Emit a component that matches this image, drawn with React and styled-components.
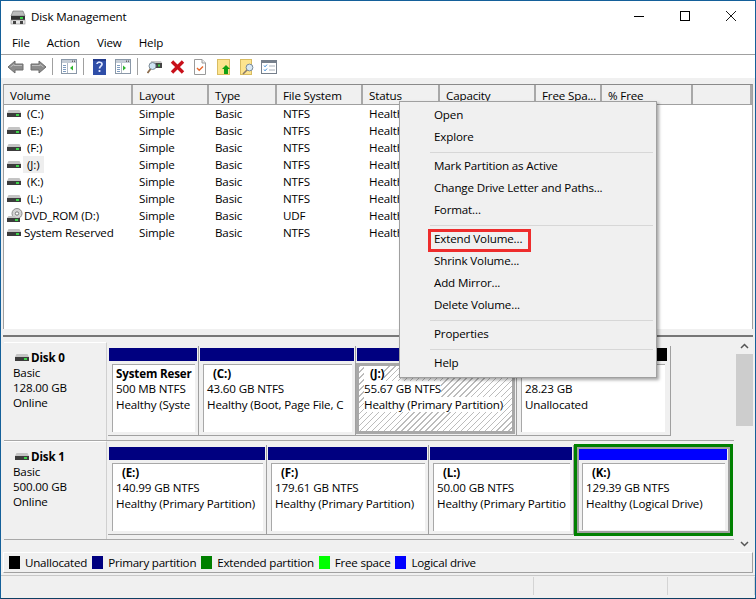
import React from 'react';
import styled, { createGlobalStyle } from 'styled-components';

const GlobalStyle = createGlobalStyle`
  html, body {
    margin: 0;
    padding: 0;
    background: #fff;
  }
`;

const Window = styled.div`
  position: relative;
  box-sizing: border-box;
  width: 756px;
  height: 599px;
  display: flex;
  flex-direction: column;
  overflow: hidden;
  background: #f0f0f0;
  border: 1px solid #14609a;
  border-bottom-color: #0f3f63;
  color: #000;
  font-family: "Open Sans", "Noto Sans", sans-serif;
  font-size: 11.6px;
  letter-spacing: -0.15px;
`;

const TitleBar = styled.div`
  height: 32px;
  flex: none;
  display: flex;
  align-items: center;
  padding: 0 1px 0 9px;
  background: #fff;
`;

const Title = styled.span`
  margin: -2px 0 0 5px;
  flex: 1;
`;

const WinControl = styled.div`
  width: 46px;
  height: 32px;
  display: flex;
  align-items: center;
  justify-content: center;
  margin-top: -2px;
`;

const MenuBar = styled.div`
  height: 21px;
  box-sizing: content-box;
  flex: none;
  display: flex;
  align-items: center;
  gap: 17px;
  padding-left: 11px;
  background: #fff;
  border-bottom: 1px solid #a0a0a0;

  & > span {
    margin-top: -2px;
  }
`;

const Toolbar = styled.div`
  height: 23px;
  flex: none;
  display: flex;
  align-items: center;
  padding-left: 6px;
  background: #fff;
`;

const ToolIcon = styled.svg`
  flex: none;
  display: block;
  margin-right: ${p => p.$gap ?? 6}px;
  transform: ${p => (p.$flip ? 'scaleX(-1)' : 'none')};
`;

const ToolSep = styled.div`
  width: 1px;
  height: 17px;
  flex: none;
  background: #a0a0a0;
  margin-right: ${p => p.$after ?? 9}px;
`;

const Band = styled.div`
  height: 6px;
  flex: none;
  background: #f0f0f0;
`;

const ListPane = styled.div`
  flex: none;
  height: 244px;
  margin: 0 2px;
  border-left: 1px solid #a0a0a0;
  border-right: 1px solid #a0a0a0;
  border-top: 1px solid #8a8a8a;
  background: #fff;
`;

const HeaderRow = styled.div`
  height: 19px;
  display: grid;
  grid-template-columns: 129px 76px 68px 86px 77px 96px 66px 91px 1fr;
  background: #f0f0f0;
  border-bottom: 1px solid #a0a0a0;
`;

const HeaderCell = styled.div`
  box-sizing: border-box;
  padding: 2px 0 0 6px;
  border-right: 2px solid #a8a8a8;
  line-height: 18px;
  white-space: nowrap;
  overflow: hidden;
`;

const Row = styled.div`
  height: 17px;
  display: grid;
  grid-template-columns: 129px 76px 68px 86px 77px 96px 66px 91px 1fr;
  align-items: center;
`;

const Cell = styled.div`
  padding-left: 6px;
  white-space: nowrap;
  overflow: hidden;
`;

const VolumeCell = styled.div`
  display: flex;
  align-items: center;
  padding-left: 3px;
  white-space: nowrap;
`;

const VolumeName = styled.span`
  margin-left: 2px;
  padding: 0 ${p => (p.$inset ? 5 : 1)}px 0 ${p => (p.$inset ? 4 : 1)}px;
  line-height: 17px;
  background: ${p => (p.$active ? '#eeeeee' : 'transparent')};
`;

const Splitter = styled.div`
  height: 6px;
  flex: none;
  margin: 0 2px 1px;
  background: #f0f0f0;
  border-bottom: 2px solid #777;
`;

const GraphPane = styled.div`
  height: 214px;
  flex: none;
  display: flex;
  margin: 0 3px;
`;

const DiskList = styled.div`
  flex: 1;
  display: flex;
  flex-direction: column;
  padding-top: 4px;
`;

const DiskRow = styled.div`
  height: 98px;
  flex: none;
  display: flex;
  width: 730px;
  border-bottom: 1px solid #a8a8a8;
`;

const DiskLabel = styled.div`
  width: 103px;
  flex: none;
  box-sizing: border-box;
  padding: 7px 0 0 9px;
  line-height: 15px;
  border-right: 1px solid #d0d0d0;
  border-top: 1px solid #fff;
`;

const DiskName = styled.div`
  display: flex;
  align-items: center;
  margin-left: 2px;
  font-weight: 700;
  gap: 2px;
`;

const PartitionsWrap = styled.div`
  flex: none;
  width: ${p => p.$w}px;
  height: 90px;
  margin-top: 4px;
  margin-left: 1px;
  display: flex;
  box-sizing: border-box;
  border-bottom: 1px solid #a0a0a0;
  border-right: ${p => (p.$closed ? '1px solid #a0a0a0' : 'none')};
`;

const Partition = styled.div`
  box-sizing: border-box;
  flex: none;
  width: ${p => p.$w}px;
  display: flex;
  flex-direction: column;
  padding: 2px ${p => p.$padRight ?? 1}px 0 1px;
  border-right: ${p => (p.$last ? 'none' : '1px solid #a0a0a0')};

  ${p => p.$selected && `
    border: 3px solid #008000;
    outline: 2px solid #a0a0a0;
    outline-offset: -5px;
    padding: 0 3px 0 2px;
    margin-top: -1px;
    margin-bottom: -2px;
  `}
`;

const PartitionBar = styled.div`
  height: 13px;
  flex: none;
  background: ${p => p.$color};
`;

const PartitionBody = styled.div`
  flex: 1;
  box-sizing: border-box;
  margin: 3px 2px 3px 3px;
  padding: 1px 0 0 3px;
  line-height: 15.3px;
  white-space: nowrap;
  overflow: hidden;
  background: #fff;
  border-top: 1px solid #a8a8a8;
  border-left: 1px solid #a8a8a8;

  ${p => p.$hatched && `
    margin: 2px 0 1px -1px;
    border: 3px solid #a8a8a8;
    padding: 0 0 0 5px;
    background: repeating-linear-gradient(135deg, #bcbcbc 0 1px, #fff 1px 4.2px);
  `}
`;

const BodyLine = styled.div`
  width: fit-content;
  background: #fff;
  font-weight: ${p => (p.$bold ? 700 : 400)};
  padding-left: ${p => (p.$indent ? 6 : 0)}px;
`;

const Scrollbar = styled.div`
  width: 17px;
  flex: none;
  display: flex;
  flex-direction: column;
  align-items: center;
  margin: -1px -1px 0 0;
`;

const ScrollArrow = styled.div`
  height: 17px;
  display: flex;
  align-items: center;
  justify-content: center;
`;

const ScrollTrack = styled.div`
  flex: 1;
  width: 100%;
`;

const ScrollThumb = styled.div`
  height: 72px;
  width: 100%;
  background: #cdcdcd;
`;

const Legend = styled.div`
  height: 21px;
  flex: none;
  box-sizing: border-box;
  margin: 0 2px;
  display: flex;
  align-items: center;
  padding-left: 5px;
  letter-spacing: -0.22px;
  border-top: 1px solid #fff;
  border-left: 1px solid #fff;
  border-right: 1px solid #a0a0a0;
  border-bottom: 1px solid #a0a0a0;
`;

const Swatch = styled.span`
  width: 11px;
  height: 13px;
  flex: none;
  box-sizing: border-box;
  background: ${p => p.$color};
  margin-right: 5px;
`;

const LegendText = styled.span`
  margin-right: 5px;
`;

const StatusBar = styled.div`
  flex: 1;
  margin-top: 2px;
  display: flex;
  border-top: 1px solid #c8c8c8;
`;

const StatusCell = styled.div`
  width: ${p => p.$w}px;
  flex: ${p => (p.$w ? 'none' : 1)};
  border-right: 1px solid #d4d4d4;
  margin: 1px 0 3px;
`;

/* the popup sits over the list and disks */
const ContextMenu = styled.div`
  position: absolute;
  left: 398px;
  top: 100px;
  width: 258px;
  box-sizing: border-box;
  padding: 3px 2px 2px;
  background: #f0f0f0;
  border: 1px solid #a0a0a0;
  box-shadow: 2px 2px 3px rgba(0, 0, 0, 0.35);
`;

const MenuItem = styled.div`
  position: relative;
  height: 22px;
  line-height: 20px;
  padding-left: 32px;

  ${p => p.$marked && `
    &::before {
      content: '';
      position: absolute;
      left: 26px;
      top: 0;
      width: 103px;
      height: 23px;
      box-sizing: border-box;
      border: 3px solid #ee2c2c;
    }
  `}
`;

const MenuSep = styled.div`
  height: 1px;
  margin: 3px 1px 3px 28px;
  background: #d7d7d7;
`;

const SmallIcon = styled.svg`
  flex: none;
  display: block;
  margin: ${p => p.$margin || 0};
`;

const DriveIcon = () => (
  <SmallIcon width="14" height="11" viewBox="0 0 14 11">
    <path d="M1.5 2 L12.5 2 L14 5 L0 5 Z" fill="#c4c4c4" />
    <rect x="0" y="5" width="14" height="4" fill="#3c3c3c" />
    <rect x="9" y="6" width="3" height="2" fill="#3ed24a" />
  </SmallIcon>
);

const DvdIcon = () => (
  <SmallIcon $margin="-1px -2px 0 0" width="16" height="15" viewBox="0 0 16 15">
    <circle cx="10" cy="5.5" r="5" fill="#d4d4d4" stroke="#8c8c8c" />
    <circle cx="10" cy="5.5" r="1.7" fill="#fff" stroke="#777" />
    <path d="M1.5 8 L8 8 L9 10 L0 10 Z" fill="#c4c4c4" />
    <rect x="0" y="10" width="13" height="4" fill="#3c3c3c" />
    <rect x="8" y="11" width="3" height="2" fill="#3ed24a" />
  </SmallIcon>
);

const AppIcon = () => (
  <SmallIcon width="16" height="16" viewBox="0 0 16 16">
    <path d="M3 2 L13 2 L15 7 L1 7 Z" fill="#bcbcbc" stroke="#6a6a6a" strokeWidth="0.6" />
    <rect x="1" y="7" width="14" height="4" fill="#333" />
    <rect x="10" y="8" width="3" height="2" fill="#3ed24a" />
    <rect x="1" y="11" width="14" height="4" fill="#e8e8e8" stroke="#8a8a8a" strokeWidth="0.6" />
    <rect x="3" y="12" width="3" height="3" fill="#444" />
    <rect x="10" y="12" width="3" height="3" fill="#444" />
  </SmallIcon>
);

const ArrowIcon = ({ flip, gap }) => (
  <ToolIcon $flip={flip} $gap={gap} width="17" height="14" viewBox="0 0 17 14">
    <path d="M1 7 L8 1 L8 4 L16 4 L16 10 L8 10 L8 13 Z" fill="#8c8c8c" stroke="#6e6e6e" />
    <path d="M3.5 7 L7 4.5 L7 5.5 L15 5.5" fill="none" stroke="#bdbdbd" />
  </ToolIcon>
);

const PanelIcon = ({ right }) => (
  <ToolIcon $gap={6} width="16" height="15" viewBox="0 0 16 15">
    <rect x="0.5" y="0.5" width="15" height="14" fill="#fff" stroke="#8a98a8" />
    <rect x="1" y="1" width="14" height="3" fill="#c4ccd6" />
    <rect x="11" y="1.5" width="1" height="1.5" fill="#666" />
    <rect x="13" y="1.5" width="1" height="1.5" fill="#666" />
    <rect x="2" y="6" width="3" height="1" fill="#7e9cc0" />
    <rect x="2" y="8" width="3" height="1" fill="#7e9cc0" />
    <rect x="2" y="10" width="3" height="1" fill="#7e9cc0" />
    <rect x="2" y="12" width="3" height="1" fill="#7e9cc0" />
    <rect x="6" y="4" width="1" height="10" fill="#b0b8c4" />
    {right
      ? <path d="M8 6.5 L11 9 L8 11.5 Z" fill="#2fb52f" />
      : <path d="M12 6.5 L9 9 L12 11.5 Z" fill="#2fb52f" />}
  </ToolIcon>
);

const HelpIcon = () => (
  <ToolIcon $gap={9} width="13" height="16" viewBox="0 0 13 16">
    <rect width="13" height="16" fill="#2f4ea8" />
    <rect width="13" height="2" fill="#223a8a" />
    <path d="M4 5 C4 2.6 9 2.6 9 5.2 C9 7.2 6.5 7.2 6.5 9.6" fill="none" stroke="#dfe7ff" strokeWidth="1.7" />
    <rect x="5.6" y="11" width="1.8" height="2" fill="#dfe7ff" />
  </ToolIcon>
);

const ConnectIcon = () => (
  <ToolIcon $gap={8} width="15" height="14" viewBox="0 0 15 14">
    <path d="M4 1 L14 1 L15 3 L4 3 Z" fill="#c8c8c8" />
    <rect x="3" y="3" width="12" height="5" fill="#444" />
    <rect x="11" y="4.5" width="2" height="2" fill="#3ed24a" />
    <circle cx="5.5" cy="6" r="3.5" fill="#cfe3f2" stroke="#7b8b98" />
    <path d="M3.5 9 L0.5 13" stroke="#8a6a4a" strokeWidth="1.8" />
  </ToolIcon>
);

const DeleteIcon = () => (
  <ToolIcon $gap={9} width="15" height="14" viewBox="0 0 15 14">
    <path d="M2 1.5 L13 12.5 M13 1.5 L2 12.5" stroke="#c8101a" strokeWidth="3.4" />
  </ToolIcon>
);

const CheckDocIcon = () => (
  <ToolIcon $gap={11} width="12" height="16" viewBox="0 0 12 16">
    <path d="M0.5 0.5 L8 0.5 L11.5 4 L11.5 15.5 L0.5 15.5 Z" fill="#fff" stroke="#9a9a9a" />
    <path d="M8 0.5 L8 4 L11.5 4" fill="#eee" stroke="#9a9a9a" />
    <path d="M3 9 L5.2 11.2 L9 7.5" fill="none" stroke="#e8662a" strokeWidth="1.4" />
  </ToolIcon>
);

const FolderUpIcon = () => (
  <ToolIcon $gap={10} width="13" height="16" viewBox="0 0 13 16">
    <rect x="0.5" y="0.5" width="12" height="15" fill="#fde48e" stroke="#d8bc62" />
    <path d="M9 6 L13 10 L11 10 L11 15 L7 15 L7 10 L5 10 Z" fill="#12a012" />
  </ToolIcon>
);

const FolderFindIcon = () => (
  <ToolIcon $gap={7} width="14" height="16" viewBox="0 0 14 16">
    <rect x="0.5" y="0.5" width="11" height="15" fill="#fde48e" stroke="#d8bc62" />
    <circle cx="9.5" cy="8.5" r="3.4" fill="#d8e8f4" stroke="#7a8a98" />
    <path d="M7 11 L3 15" stroke="#8a7a6a" strokeWidth="1.6" />
  </ToolIcon>
);

const ChecklistIcon = () => (
  <ToolIcon $gap={0} width="16" height="14" viewBox="0 0 16 14">
    <rect x="0.5" y="0.5" width="15" height="13" fill="#fff" stroke="#76808c" />
    <rect x="1" y="1" width="14" height="2" fill="#76808c" />
    <path d="M3 5.5 L4 6.8 L6 4.6 M3 9.5 L4 10.8 L6 8.6" fill="none" stroke="#3a8ad8" />
    <path d="M8 6 L14 6 M8 10 L14 10" stroke="#aab2bc" />
  </ToolIcon>
);

const COLUMNS = ['Volume', 'Layout', 'Type', 'File System', 'Status', 'Capacity', 'Free Spa...', '% Free', ''];

const VOLUMES = [
  { name: '(C:)', inset: true, fs: 'NTFS' },
  { name: '(E:)', inset: true, fs: 'NTFS' },
  { name: '(F:)', inset: true, fs: 'NTFS' },
  { name: '(J:)', inset: true, active: true, fs: 'NTFS' },
  { name: '(K:)', inset: true, fs: 'NTFS' },
  { name: '(L:)', inset: true, fs: 'NTFS' },
  { name: 'DVD_ROM (D:)', dvd: true, fs: 'UDF' },
  { name: 'System Reserved', fs: 'NTFS' },
];

const NAVY = '#000080';

const DISK0 = [
  { w: 91, color: NAVY, name: 'System Reser', size: '500 MB NTFS', state: 'Healthy (Syste' },
  { w: 157, color: NAVY, name: '(C:)', indent: true, size: '43.60 GB NTFS', state: 'Healthy (Boot, Page File, C' },
  { w: 161, color: NAVY, name: '(J:)', indent: true, hatched: true, size: '55.67 GB NTFS', state: 'Healthy (Primary Partition)' },
  { w: 153, color: '#000', size: '28.23 GB', state: 'Unallocated', last: true, padRight: 3 },
];

const DISK1 = [
  { w: 159, color: NAVY, name: '(E:)', indent: true, size: '140.99 GB NTFS', state: 'Healthy (Primary Partition)' },
  { w: 162, color: NAVY, name: '(F:)', indent: true, size: '179.61 GB NTFS', state: 'Healthy (Primary Partition)' },
  { w: 145, color: NAVY, name: '(L:)', indent: true, size: '50.00 GB NTFS', state: 'Healthy (Primary Partitio' },
  { w: 159, color: '#0000ff', name: '(K:)', indent: true, selected: true, last: true, size: '129.39 GB NTFS', state: 'Healthy (Logical Drive)' },
];

const LEGEND = [
  ['#000', 'Unallocated'],
  [NAVY, 'Primary partition'],
  ['#008000', 'Extended partition'],
  ['#00ff00', 'Free space'],
  ['#0000ff', 'Logical drive'],
];

const renderPartition = p => (
  <Partition key={p.state + p.size} $w={p.w} $last={p.last} $selected={p.selected} $padRight={p.padRight}>
    <PartitionBar $color={p.color} />
    <PartitionBody $hatched={p.hatched}>
      <BodyLine $bold $indent={p.indent}>{p.name || '\u00a0'}</BodyLine>
      <BodyLine>{p.size}</BodyLine>
      <BodyLine>{p.state}</BodyLine>
    </PartitionBody>
  </Partition>
);

const App = () => (
  <Window>
    <GlobalStyle />
    <TitleBar>
      <AppIcon />
      <Title>Disk Management</Title>
      <WinControl>
        <svg width="10" height="10" viewBox="0 0 10 10"><path d="M0 5.5 H10" stroke="#000" /></svg>
      </WinControl>
      <WinControl>
        <svg width="10" height="10" viewBox="0 0 10 10"><rect x="0.5" y="0.5" width="9" height="9" fill="none" stroke="#000" /></svg>
      </WinControl>
      <WinControl>
        <svg width="10" height="10" viewBox="0 0 10 10"><path d="M0 0 L10 10 M10 0 L0 10" stroke="#000" strokeWidth="0.9" /></svg>
      </WinControl>
    </TitleBar>
    <MenuBar>
      <span>File</span>
      <span>Action</span>
      <span>View</span>
      <span>Help</span>
    </MenuBar>
    <Toolbar>
      <ArrowIcon />
      <ArrowIcon flip gap={5} />
      <ToolSep $after={8} />
      <PanelIcon />
      <ToolSep />
      <HelpIcon />
      <PanelIcon right />
      <ToolSep />
      <ConnectIcon />
      <DeleteIcon />
      <CheckDocIcon />
      <FolderUpIcon />
      <FolderFindIcon />
      <ChecklistIcon />
    </Toolbar>
    <Band />
    <ListPane>
      <HeaderRow>
        {COLUMNS.map((c, i) => <HeaderCell key={i}>{c}</HeaderCell>)}
      </HeaderRow>
      {VOLUMES.map(v => (
        <Row key={v.name}>
          <VolumeCell>
            {v.dvd ? <DvdIcon /> : <DriveIcon />}
            <VolumeName $inset={v.inset} $active={v.active}>{v.name}</VolumeName>
          </VolumeCell>
          <Cell>Simple</Cell>
          <Cell>Basic</Cell>
          <Cell>{v.fs}</Cell>
          <Cell>Healthy</Cell>
        </Row>
      ))}
    </ListPane>
    <Splitter />
    <GraphPane>
      <DiskList>
        <DiskRow>
          <DiskLabel>
            <DiskName><DriveIcon />Disk 0</DiskName>
            Basic<br />128.00 GB<br />Online
          </DiskLabel>
          <PartitionsWrap $w={563} $closed>
            {DISK0.map(renderPartition)}
          </PartitionsWrap>
        </DiskRow>
        <DiskRow>
          <DiskLabel>
            <DiskName><DriveIcon />Disk 1</DiskName>
            Basic<br />500.00 GB<br />Online
          </DiskLabel>
          <PartitionsWrap $w={625}>
            {DISK1.map(renderPartition)}
          </PartitionsWrap>
        </DiskRow>
      </DiskList>
      <Scrollbar>
        <ScrollArrow>
          <svg width="9" height="6" viewBox="0 0 9 6"><path d="M1 5 L4.5 1.5 L8 5" fill="none" stroke="#555" strokeWidth="1.5" /></svg>
        </ScrollArrow>
        <ScrollThumb />
        <ScrollTrack />
        <ScrollArrow>
          <svg width="9" height="6" viewBox="0 0 9 6"><path d="M1 1 L4.5 4.5 L8 1" fill="none" stroke="#555" strokeWidth="1.5" /></svg>
        </ScrollArrow>
      </Scrollbar>
    </GraphPane>
    <Legend>
      {LEGEND.map(([color, text]) => (
        <React.Fragment key={text}>
          <Swatch $color={color} />
          <LegendText>{text}</LegendText>
        </React.Fragment>
      ))}
    </Legend>
    <StatusBar>
      <StatusCell $w={532} />
      <StatusCell $w={133} />
      <StatusCell />
    </StatusBar>
    <ContextMenu>
      <MenuItem>Open</MenuItem>
      <MenuItem>Explore</MenuItem>
      <MenuSep />
      <MenuItem>Mark Partition as Active</MenuItem>
      <MenuItem>Change Drive Letter and Paths...</MenuItem>
      <MenuItem>Format...</MenuItem>
      <MenuSep />
      <MenuItem $marked>Extend Volume...</MenuItem>
      <MenuItem>Shrink Volume...</MenuItem>
      <MenuItem>Add Mirror...</MenuItem>
      <MenuItem>Delete Volume...</MenuItem>
      <MenuSep />
      <MenuItem>Properties</MenuItem>
      <MenuSep />
      <MenuItem>Help</MenuItem>
    </ContextMenu>
  </Window>
);

export default App;
